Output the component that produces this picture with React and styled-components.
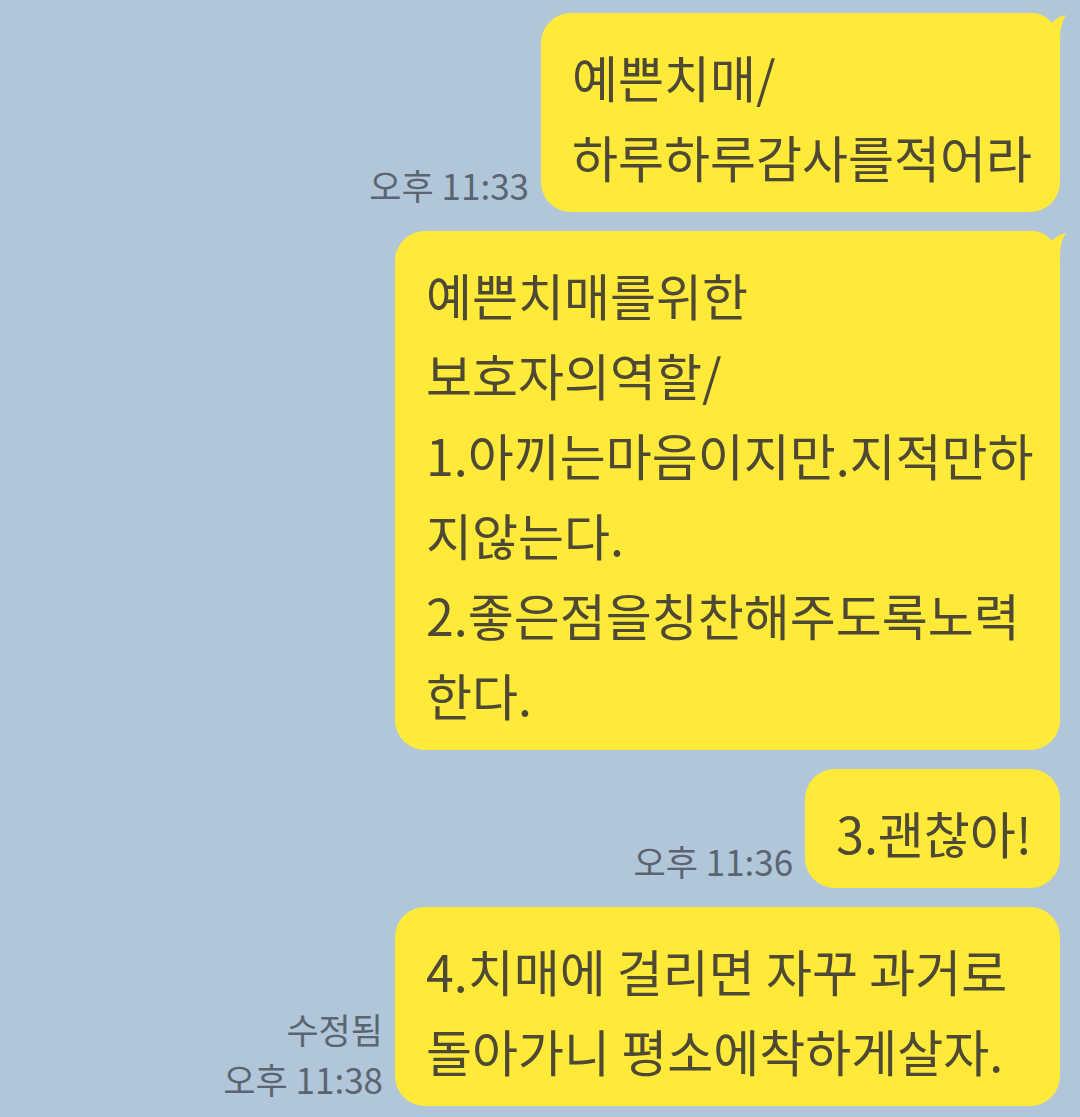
import styled, { createGlobalStyle } from "styled-components";

const GlobalStyle = createGlobalStyle`
  html, body {
    margin: 0;
    padding: 0;
    background: #b1c6d8;
  }

  body {
    font-family: "Noto Sans CJK KR", "Noto Sans", sans-serif;
  }
`;

const Chat = styled.div`
  display: flex;
  flex-direction: column;
  gap: 19px;
  min-height: 1117px;
  padding: 13px 20px 0 0;
  box-sizing: border-box;
  background: #b1c6d8;
`;

const Row = styled.div`
  display: flex;
  align-items: flex-end;
  justify-content: flex-end;
  gap: 12px;
`;

const Meta = styled.div`
  display: flex;
  flex-direction: column;
  align-items: flex-end;
  padding-bottom: 2px;
  color: #5a6571;
  font-size: 35px;
  line-height: 50px;
  white-space: nowrap;
`;

const Bubble = styled.div`
  position: relative;
  box-sizing: border-box;
  width: ${props => (props.wide ? "665px" : "auto")};
  padding: 23px 28px 16px 31px;
  border-radius: 30px;
  background: #ffea3a;
  color: #4d4935;
  font-size: 50px;
  font-weight: 400;
  line-height: 80px;
`;

const Line = styled.div`
  white-space: nowrap;
`;

const Tail = styled.svg`
  position: absolute;
  top: 0;
  right: -8px;
  width: 48px;
  height: 40px;
`;

const messages = [
  { lines: ["예쁜치매/", "하루하루감사를적어라"], meta: ["오후 11:33"], tail: true },
  {
    lines: [
      "예쁜치매를위한",
      "보호자의역할/",
      "1.아끼는마음이지만.지적만하",
      "지않는다.",
      "2.좋은점을칭찬해주도록노력",
      "한다.",
    ],
    tail: true,
    wide: true,
  },
  { lines: ["3.괜찮아!"], meta: ["오후 11:36"] },
  {
    lines: ["4.치매에 걸리면 자꾸 과거로", "돌아가니 평소에착하게살자."],
    meta: ["수정됨", "오후 11:38"],
    wide: true,
  },
];

export default () => (
  <>
    <GlobalStyle />
    <Chat>
      {messages.map(({ lines, meta, tail, wide }, i) => (
        <Row key={i}>
          {meta && (
            <Meta>
              {meta.map(m => (
                <span key={m}>{m}</span>
              ))}
            </Meta>
          )}
          <Bubble wide={wide}>
            {tail && (
              <Tail viewBox="0 0 48 40">
                <path
                  d="M0 0 H10 C22 0 28 4 31 11 C35 6 40 3 46 2 C42 8 40 16 40 27 V40 H0 Z"
                  fill="#ffea3a"
                />
              </Tail>
            )}
            {lines.map((l, j) => (
              <Line key={j}>{l}</Line>
            ))}
          </Bubble>
        </Row>
      ))}
    </Chat>
  </>
);
